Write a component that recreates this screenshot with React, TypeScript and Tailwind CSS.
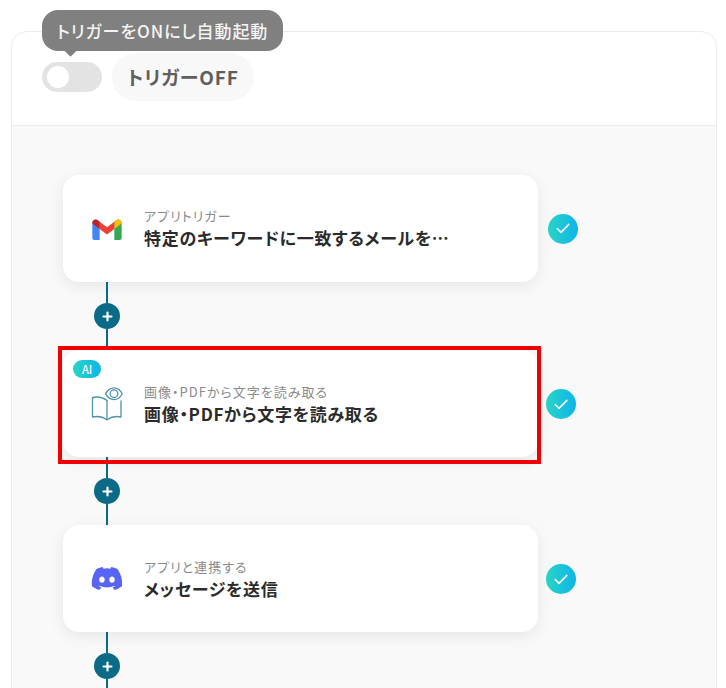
import { Fragment } from "react"

const FONT = { fontFamily: '"Noto Sans CJK JP", "Noto Sans", sans-serif' }

function GmailIcon() {
  return (
    <svg width="30" height="22" viewBox="0 0 32 24" fill="none">
      <path d="M0 5.500C0 2 3.600 0.400 6 2.400L8 4V24H2.200C1 24 0 23 0 21.800Z" fill="#4285F4" />
      <path d="M24 4l2-1.600C28.400 0.400 32 2 32 5.500V21.800C32 23 31 24 29.800 24H24Z" fill="#34A853" />
      <path d="M24 4v8l8-6V5.500C32 2 28.400 0.400 26 2.400Z" fill="#FBBC04" />
      <path d="M8 12V4l8 6 8-6v8l-8 6Z" fill="#EA4335" />
      <path d="M0 5.500V6l8 6V4L6 2.400C3.600 0.400 0 2 0 5.500Z" fill="#C5221F" />
    </svg>
  )
}

function OcrIcon() {
  return (
    <svg width="32" height="34" viewBox="0 0 32 34" fill="none" stroke="#4f93a8" strokeWidth="1.300" strokeLinejoin="round" strokeLinecap="round">
      <path d="M16 13.500C12 10.500 6 9.500 1.500 10.500V30C6 29 12 30 16 32.800C20 30 26 29 30 30V14" />
      <path d="M16 13.500V32.800" />
      <path d="M14.500 6.700C17 2.500 20 0.800 23 0.800C26 0.800 29 2.500 31.300 6.700C29 10.900 26 12.600 23 12.600C20 12.600 17 10.900 14.500 6.700Z" />
      <circle cx="23" cy="6.700" r="3.800" />
    </svg>
  )
}

function DiscordIcon() {
  return (
    <svg width="32" height="23" viewBox="0 0 127.140 96.360">
      <path fill="#5865F2" d="M107.700 8.070A105.150 105.150 0 0 0 81.470 0a72.060 72.060 0 0 0-3.360 6.830 97.680 97.680 0 0 0-29.110 0A72.370 72.370 0 0 0 45.640 0a105.890 105.890 0 0 0-26.250 8.090C2.790 32.650-1.710 56.600.54 80.210a105.730 105.730 0 0 0 32.170 16.150 77.700 77.700 0 0 0 6.890-11.110 68.420 68.420 0 0 1-10.850-5.180c.91-.66 1.800-1.340 2.660-2a75.570 75.570 0 0 0 64.320 0c.87.710 1.760 1.390 2.660 2a68.680 68.680 0 0 1-10.870 5.190 77 77 0 0 0 6.890 11.100 105.250 105.250 0 0 0 32.190-16.140c2.640-27.380-4.510-51.110-18.900-72.150ZM42.450 65.690C36.180 65.690 31 60 31 53s5-12.740 11.430-12.740S54 46 53.890 53s-5.050 12.690-11.440 12.690Zm42.240 0C78.410 65.690 73.250 60 73.250 53s5-12.740 11.440-12.740S96.230 46 96.120 53s-5.040 12.690-11.430 12.690Z" />
    </svg>
  )
}

function CheckBadge() {
  return (
    <div className="flex h-[30px] w-[30px] items-center justify-center rounded-full bg-gradient-to-r from-[#2bd4c4] to-[#0fb4ea]">
      <svg width="14" height="11" viewBox="0 0 14 11" fill="none" stroke="#fff" strokeWidth="1.600" strokeLinecap="round" strokeLinejoin="round">
        <path d="M1.200 5.500L5 9.400L12.800 1.400" />
      </svg>
    </div>
  )
}

function PlusButton() {
  return (
    <div className="flex h-[26px] w-[26px] items-center justify-center rounded-full bg-[#0b6a85]">
      <svg width="11" height="11" viewBox="0 0 11 11" stroke="#fff" strokeWidth="2.200" strokeLinecap="round">
        <path d="M5.500 1.500V9.500M1.500 5.500H9.500" />
      </svg>
    </div>
  )
}

function Connector() {
  return (
    <div className="ml-[31px] flex h-[68px] w-[26px] flex-col items-center">
      <div className="w-0.5 flex-1 bg-[#0b6a85]" />
      <PlusButton />
      <div className="w-0.5 flex-1 bg-[#0b6a85]" />
    </div>
  )
}

type Step = { label: string; title: string; icon: React.ReactNode; ai?: boolean; badgeGap: string; textPad: string }

const STEPS: Step[] = [
  { label: "アプリトリガー", title: "特定のキーワードに一致するメールを…", icon: <GmailIcon />, badgeGap: "ml-[10px]", textPad: "pt-0" },
  { label: "画像・PDFから文字を読み取る", title: "画像・PDFから文字を読み取る", icon: <OcrIcon />, ai: true, badgeGap: "ml-[8px] mt-[1px]", textPad: "pt-[2px]" },
  { label: "アプリと連携する", title: "メッセージを送信", icon: <DiscordIcon />, badgeGap: "ml-[8px] mt-[1px]", textPad: "pt-[2px]" },
]

function StepCard({ step }: { step: Step }) {
  return (
    <div className="flex items-center">
      <div className="relative flex h-[107px] w-[475px] items-center rounded-2xl bg-white pl-[28px] shadow-[0_4px_16px_rgba(0,0,0,0.08)]">
        {step.ai && (
          <div className="absolute -bottom-[7px] -left-[5px] -right-[3px] -top-[4px] border-[4px] border-[#f00000]" />
        )}
        {step.ai && (
          <span className="absolute left-[10px] top-[10px] flex h-[18px] w-[28px] items-center justify-center rounded-full bg-gradient-to-r from-[#2bd4c4] to-[#0fb4ea] text-[11px] font-medium text-white">AI</span>
        )}
        <div className="flex w-[32px] items-center justify-center">{step.icon}</div>
        <div className={`ml-[21px] flex flex-col [font-feature-settings:'palt'] ${step.textPad}`}>
          <span className="text-[13px] leading-[18px] tracking-[1px] text-[#8a8a8a]">{step.label}</span>
          <span className="text-[17px] font-bold leading-[25px] tracking-[0.7px] text-[#2b2b2b]">{step.title}</span>
        </div>
      </div>
      <div className={step.badgeGap}><CheckBadge /></div>
    </div>
  )
}

export default function App() {
  return (
    <div className="h-[688px] w-[726px] overflow-hidden bg-white pl-[11px] pt-[31px]" style={FONT}>
      <div className="h-[700px] w-[706px] rounded-t-2xl border border-[#ececec]">
        <div className="relative flex h-[94px] gap-[10px] border-b border-[#ececec] pl-[30px] pt-[21px]">
          <div className="absolute left-[30px] top-[-22px] flex h-[41px] w-[241px] items-center justify-center rounded-2xl bg-[#808080] text-[17px] font-medium tracking-[0.9px] text-[#f4f4f4] [font-feature-settings:'palt']">
            トリガーをONにし自動起動
            <div className="absolute bottom-[-4px] left-[24px] h-[9px] w-[9px] rotate-45 bg-[#808080]" />
          </div>
          <div className="mt-[9px] flex h-[30px] w-[60px] items-center rounded-full bg-[#e3e3e3] pl-[5px]">
            <div className="h-[22px] w-[22px] rounded-full bg-white" />
          </div>
          <div className="flex h-[48px] w-[142px] items-center justify-center rounded-full bg-[#f8f8f8] text-[19px] font-bold tracking-[0.85px] text-[#5f5f5f] [font-feature-settings:'palt']">トリガーOFF</div>
        </div>
        <div className="h-full bg-[#f9f9f9] pl-[51px] pt-[49px]">
          {STEPS.map((step, i) => (
            <Fragment key={step.title}>
              {i > 0 && <Connector />}
              <StepCard step={step} />
            </Fragment>
          ))}
          <Connector />
        </div>
      </div>
    </div>
  )
}
